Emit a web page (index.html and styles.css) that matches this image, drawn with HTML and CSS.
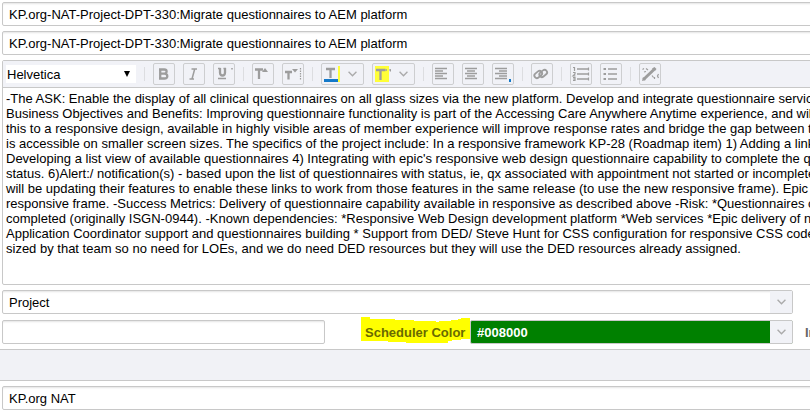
FILE: index.html
```html
<!DOCTYPE html>
<html lang="en">
<head>
<meta charset="utf-8">
<title>Project details</title>
<link rel="stylesheet" href="styles.css">
</head>
<body>
<main class="form">
  <div class="field wide">KP.org-NAT-Project-DPT-330:Migrate questionnaires to AEM platform</div>
  <div class="field wide">KP.org-NAT-Project-DPT-330:Migrate questionnaires to AEM platform</div>
  <section class="editor">
    <div class="toolbar">
      <div class="font-select"><span>Helvetica</span><svg width="6" height="6" viewBox="0 0 6 6"><path d="M0 0h6L3 6z" fill="#000"/></svg></div>
      <i class="sep"></i>
      <div class="btn"><svg viewBox="0 0 20 20"><path class="s2" d="M6.2 5v10M5 5.5h5.3q2.300 0 2.300 2t-2.300 2.200H6.500M10 9.700q3.300 0 3.300 2.500T10 14.500H5"/></svg></div>
      <div class="btn"><svg viewBox="0 0 20 20"><path class="s" d="M7.500 5H13M10.700 5L8 15M5.500 15H10"/></svg></div>
      <div class="btn"><svg viewBox="0 0 20 20"><path class="s2" d="M6 4v4.500q0 3 2.500 3t2.500-3V4"/><path class="s" d="M4 4.500h2.500M4 14.500h8M9.500 4.500H12M18 4v1.500"/></svg></div>
      <i class="sep"></i>
      <div class="btn"><svg viewBox="0 0 20 20"><path class="s2" d="M2 5.500h8M6 5.500V15"/><path class="f" d="M9 8h6l-3-4z"/></svg></div>
      <div class="btn"><svg viewBox="0 0 20 20"><path class="s2" d="M2 8h7M5.500 8v7.500"/><path class="f" d="M9 5h6l-3 3.500z"/><path class="thin" stroke-dasharray="1.500 1" d="M17.500 4v12"/></svg></div>
      <i class="sep"></i>
      <div class="btn split"><svg viewBox="0 0 20 20"><path class="s2" d="M4 5h9M8.500 5v9"/><path fill="#1479c9" d="M2 15h14v3H2z"/><path fill="#ffff38" d="M16 2h2v16h-2z"/></svg><svg class="chev" viewBox="0 0 8 5"><path d="M.500.500L4 4 7.500.500"/></svg></div>
      <div class="btn split"><svg viewBox="0 0 20 20"><path fill="#ffff38" d="M2 2h14v16H2z"/><path class="s2" d="M3 6h9.500M7.500 6v10"/><path class="f" d="M12 6l2-1v2zM16 5.500l2-.500v2.500h-1z"/></svg><svg class="chev" viewBox="0 0 8 5"><path d="M.500.500L4 4 7.500.500"/></svg></div>
      <i class="sep"></i>
      <div class="btn"><svg viewBox="0 0 20 20"><path class="l" d="M2 4.500h12M2 7h8M2 9.500h12M2 12h8M2 14.500h12"/></svg></div>
      <div class="btn"><svg viewBox="0 0 20 20"><path class="l" d="M2 4.500h12M4 7h8M2 9.500h12M4 12h8M2 14.500h12"/></svg></div>
      <div class="btn"><svg viewBox="0 0 20 20"><path class="l" d="M2 4.500h12M6 7h8M2 9.500h12M6 12h8M2 14.500h12"/><path fill="#1479c9" d="M16 15h2v3h-2z"/></svg></div>
      <i class="sep"></i>
      <div class="btn"><svg viewBox="0 0 20 20"><g class="link"><rect x="2" y="8" width="8.500" height="5" rx="2.500" transform="rotate(-40 6.200 10.500)"/><rect x="7" y="7" width="8.500" height="5" rx="2.500" transform="rotate(-40 11.200 9.500)"/></g></svg></div>
      <i class="sep"></i>
      <div class="btn"><svg viewBox="0 0 20 20"><path class="l" d="M6 5h12M6 10h12M6 15h12"/><path class="thin" d="M2 3.500h1.500V7M2 8.500h2V10L2 12h2.500M2 13.500h2v3H2M2 15h2M17.500 3.500v3M17.500 8.500v3M17.500 13.500v3"/></svg></div>
      <div class="btn"><svg viewBox="0 0 20 20"><path class="l" d="M7 5h9M7 10h9M7 15h9"/><path class="f" d="M2.500 4h2.500v2H2.500zM2.500 9h2.500v2H2.500zM2.500 14h2.500v2H2.500z"/></svg></div>
      <i class="sep"></i>
      <div class="btn"><svg viewBox="0 0 20 20"><path class="wand" d="M3.500 15.500L14 5.500"/><path class="f" d="M2 17l1-4L6 16zM12 4.500L14.500 3l2 2-1.500 2z"/><path class="thin" d="M2.500 5.500l1.500-1M6 4.500l2 1.500M4 8l2-.500M12 11.500l1.500 2M14.500 13v2M18.500 10l-1 2 1 2"/></svg></div>
    </div>
    <div class="copy">
      <p>-The ASK: Enable the display of all clinical questionnaires on all glass sizes via the new platform. Develop and integrate questionnaire services</p>
      <p>Business Objectives and Benefits: Improving questionnaire functionality is part of the Accessing Care Anywhere Anytime experience, and will</p>
      <p>this to a responsive design, available in highly visible areas of member experience will improve response rates and bridge the gap between the</p>
      <p>is accessible on smaller screen sizes. The specifics of the project include: In a responsive framework KP-28 (Roadmap item) 1) Adding a link</p>
      <p>Developing a list view of available questionnaires 4) Integrating with epic's responsive web design questionnaire capability to complete the qx</p>
      <p>status. 6)Alert:/ notification(s) - based upon the list of questionnaires with status, ie, qx associated with appointment not started or incomplete</p>
      <p>will be updating their features to enable these links to work from those features in the same release (to use the new responsive frame). Epic</p>
      <p>responsive frame. -Success Metrics: Delivery of questionnaire capability available in responsive as described above -Risk: *Questionnaires c</p>
      <p>completed (originally ISGN-0944). -Known dependencies: *Responsive Web Design development platform *Web services *Epic delivery of n</p>
      <p>Application Coordinator support and questionnaires building * Support from DED/ Steve Hunt for CSS configuration for responsive CSS code</p>
      <p>sized by that team so no need for LOEs, and we do need DED resources but they will use the DED resources already assigned.</p>
    </div>
  </section>
  <div class="field combo project"><span>Project</span><b class="drop"><svg class="chev" viewBox="0 0 8 5"><path d="M.500.500L4 4 7.500.500"/></svg></b></div>
  <div class="row">
    <div class="field short"></div>
    <div class="label"><svg class="marker" width="109" height="26" viewBox="0 0 109 26"><path fill="#ff0" d="M0 0h9v2h25v1h19v1h22v1h3V4h12V3h7V2h3V1h9v21h-9v1h-9v1H87v2H45v-1H27v-1H0z"/></svg><span>Scheduler Color</span></div>
    <div class="field combo color"><span>#008000</span><b class="drop"><svg class="chev" viewBox="0 0 8 5"><path d="M.500.500L4 4 7.500.500"/></svg></b></div>
    <div class="next-label">In</div>
  </div>
</main>
<div class="band"></div>
<div class="form last"><div class="field wide">KP.org NAT</div></div>
</body>
</html>
```
FILE: styles.css
```css
* { box-sizing: border-box; }
body { margin: 0; width: 810px; height: 412px; overflow: hidden; background: #fff; color: #000; font: 13px/15px "Liberation Sans", Arial, sans-serif; }
.form { display: flex; flex-direction: column; padding: 2px 0 0 2px; height: 349px; }
.field { height: 24px; flex: none; border: 1px solid #c8c8c8; border-radius: 2px; padding: 4px 6px 0; white-space: nowrap; box-shadow: inset 0 2px 2px -1px #e4e4e4; background: #fff; }
.wide { width: 820px; margin-bottom: 5px; }
.editor { width: 820px; height: 225px; flex: none; border: 1px solid #c8c8c8; border-radius: 2px; margin-bottom: 5px; }
.toolbar { height: 27px; background: #f1f2f7; border-bottom: 1px solid #c8c8c8; display: flex; align-items: center; gap: 8px; padding-left: 3px; }
.font-select { width: 130px; height: 18px; background: #fff; display: flex; align-items: center; justify-content: space-between; padding: 0 6px 0 1px; }
.sep { width: 1px; height: 14px; background: #dcdde0; flex: none; }
.btn { width: 22px; height: 22px; border: 1px solid #cdced0; border-radius: 2px; flex: none; display: flex; align-items: center; }
.btn > svg:first-child { width: 20px; height: 20px; flex: none; }
.split { width: 43px; gap: 6px; }
.s, .s2, .l, .thin, .link, .wand { fill: none; stroke: #9d9d9d; }
.s { stroke-width: 1.5; }
.s2 { stroke-width: 2.3; }
.l { stroke-width: 1.6; }
.thin { stroke-width: 1.2; }
.link { stroke-width: 1.8; }
.wand { stroke-width: 3; }
.f { fill: #9d9d9d; }
.chev { width: 9px; height: 6px; fill: none; stroke: #aaa; stroke-width: 1.2; }
.copy { padding: 3px 0 0 3px; white-space: nowrap; }
.copy p { margin: 0; width: max-content; height: 15px; }
.combo { display: flex; justify-content: space-between; padding: 0; }
.combo span { padding: 4px 6px 0; }
.drop { width: 22px; height: 22px; background: #f1f2f7; display: flex; align-items: center; justify-content: center; }
.project { width: 791px; margin-bottom: 6px; }
.row { display: flex; }
.short { width: 323px; }
.label { width: 145px; flex: none; position: relative; padding: 5px 0 0 40px; color: #6a6a00; font-weight: bold; white-space: nowrap; }
.label span { position: relative; }
.marker { position: absolute; left: 36px; top: -3px; }
.color { width: 323px; background: #008000; color: #fff; font-weight: bold; box-shadow: none; }
.next-label { flex: none; padding: 5px 0 0 12px; color: #666; font-weight: bold; }
.band { height: 32px; background: #f1f2f6; border-top: 1px solid #c8c8c8; border-bottom: 1px solid #c8c8c8; }
.last { padding-top: 5px; height: 31px; }
```
